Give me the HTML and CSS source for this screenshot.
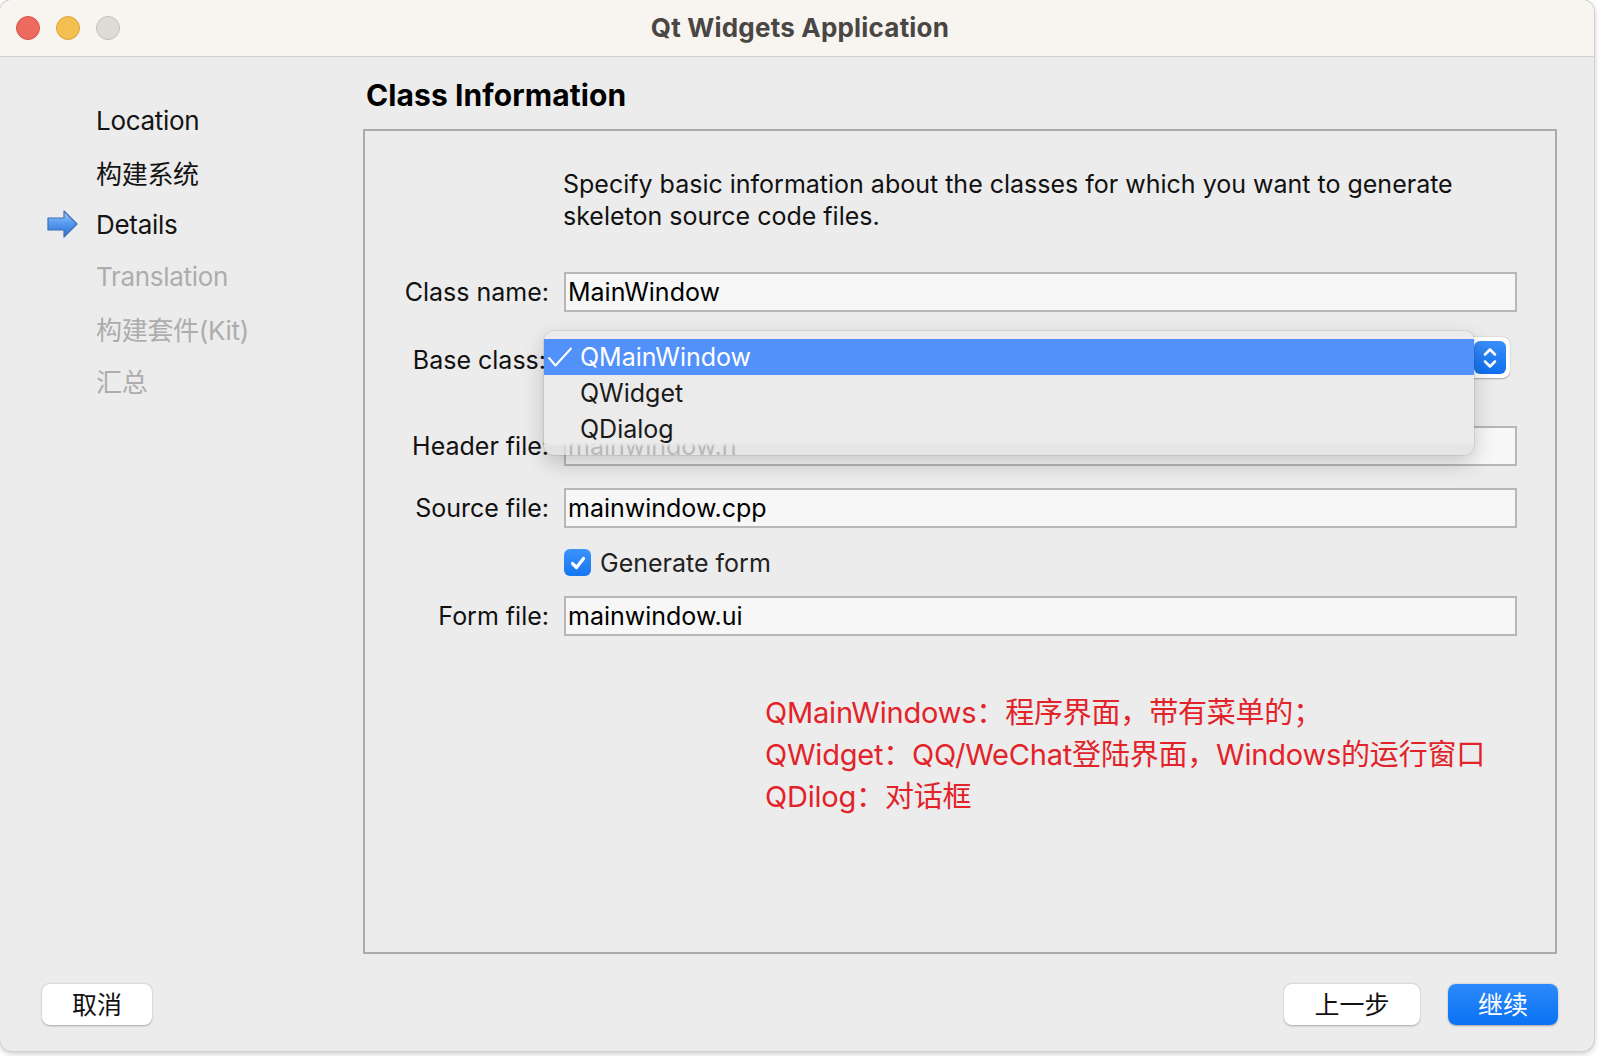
FILE: index.html
```html
<!DOCTYPE html>
<html>
<head>
<meta charset="utf-8">
<link rel="stylesheet" href="styles.css">
</head>
<body>
<div class="window">
  <div class="titlebar">
    <div class="lights">
      <span class="light red"></span>
      <span class="light yellow"></span>
      <span class="light gray"></span>
    </div>
    <div class="title">Qt Widgets Application</div>
  </div>
  <div class="content">
    <div class="sidebar">
      <div class="step done"><span class="marker"></span>Location</div>
      <div class="step done"><span class="marker"></span>构建系统</div>
      <div class="step current"><span class="marker"><svg width="32" height="30" viewBox="0 0 32 30"><defs><linearGradient id="ag" x1="0" y1="0" x2="0" y2="1"><stop offset="0" stop-color="#a4cbf8"/><stop offset="0.45" stop-color="#5a9cf0"/><stop offset="1" stop-color="#2a6fd6"/></linearGradient></defs><polygon points="1,9 17,9 17,2 30,15 17,28 17,21 1,21" fill="url(#ag)" stroke="#3d6fae" stroke-width="1.2" stroke-linejoin="round"/></svg></span>Details</div>
      <div class="step todo"><span class="marker"></span>Translation</div>
      <div class="step todo"><span class="marker"></span>构建套件(Kit)</div>
      <div class="step todo"><span class="marker"></span>汇总</div>
    </div>
    <div class="main">
      <h1 class="heading">Class Information</h1>
      <div class="group">
        <p class="desc">Specify basic information about the classes for which you want to generate skeleton source code files.</p>
        <div class="row r-class">
          <label class="lbl">Class name:</label>
          <div class="field">MainWindow</div>
        </div>
        <div class="row r-base">
          <label class="lbl">Base class:</label>
          <div class="combo">
            <span class="stepper"><svg width="18" height="26" viewBox="0 0 18 26"><path d="M4 9.5 L9 4.5 L14 9.5 M4 16.5 L9 21.5 L14 16.5" fill="none" stroke="#fff" stroke-width="2.6" stroke-linecap="round" stroke-linejoin="round"/></svg></span>
            <div class="menu">
              <div class="item selected"><span class="check"><svg width="26" height="20" viewBox="0 0 26 20"><path d="M2 11 L8.5 18.5 L24 1.5" fill="none" stroke="#fff" stroke-width="2" stroke-linecap="round" stroke-linejoin="round"/></svg></span>QMainWindow</div>
              <div class="item"><span class="check"></span>QWidget</div>
              <div class="item"><span class="check"></span>QDialog</div>
            </div>
          </div>
        </div>
        <div class="row r-header">
          <label class="lbl">Header file:</label>
          <div class="field dim">mainwindow.h</div>
        </div>
        <div class="row r-source">
          <label class="lbl">Source file:</label>
          <div class="field">mainwindow.cpp</div>
        </div>
        <div class="row r-check">
          <span class="lbl"></span>
          <div class="checkwrap"><span class="checkbox"><svg width="20" height="20" viewBox="0 0 20 20"><path d="M4.5 10.5 L8.5 14.5 L15.5 5.5" fill="none" stroke="#fff" stroke-width="3.2" stroke-linecap="round" stroke-linejoin="round"/></svg></span>Generate form</div>
        </div>
        <div class="row r-form">
          <label class="lbl">Form file:</label>
          <div class="field">mainwindow.ui</div>
        </div>
        <div class="notes">
          <div>QMainWindows：程序界面，带有菜单的；</div>
          <div>QWidget：QQ/WeChat登陆界面，Windows的运行窗口</div>
          <div>QDilog：对话框</div>
        </div>
      </div>
    </div>
  </div>
  <div class="footer">
    <button class="btn">取消</button>
    <div class="spacer"></div>
    <button class="btn back">上一步</button>
    <button class="btn primary">继续</button>
  </div>
</div>
</body>
</html>
```

FILE: styles.css
```css
* { box-sizing: border-box; }
html, body { margin: 0; padding: 0; background: #ffffff; }
body {
  width: 1600px; height: 1056px; overflow: hidden;
  font-family: Inter, "Noto Sans CJK SC", sans-serif;
  color: #111;
}
.window {
  width: 1594px; height: 1051px;
  background: #ececec;
  border-radius: 12px;
  overflow: hidden;
  display: flex; flex-direction: column;
  box-shadow: 0 0 0 1px #cfcfcf, 0 2px 6px rgba(0,0,0,0.25);
}
.titlebar {
  height: 57px; flex: none;
  background: #f8f5f0;
  border-bottom: 1px solid #d5d2ce;
  position: relative;
  display: flex; align-items: center; justify-content: center;
}
.lights { position: absolute; left: 16px; top: 16px; display: flex; gap: 16px; }
.light { width: 24px; height: 24px; border-radius: 50%; display: block; }
.red { background: #ee6a5f; border: 1px solid #d35548; }
.yellow { background: #f5bf4f; border: 1px solid #d8a442; }
.gray { background: #dedad6; border: 1px solid #c4c0bc; }
.title {
  font-size: 26px; font-weight: 700; color: #4a4644; letter-spacing: 0.2px;
  margin-top: -2px; margin-left: 6px;
}
.content { flex: 1; display: flex; min-height: 0; }
.sidebar { width: 363px; flex: none; padding-top: 37px; }
.step {
  height: 52px; display: flex; align-items: center;
  font-size: 26px; letter-spacing: -0.3px;
}
.step .marker { width: 96px; flex: none; display: flex; justify-content: flex-start; padding-left: 47px; }
.step.done, .step.current { color: #141414; }
.step.todo { color: #adadad; }
.main { flex: 1; display: flex; flex-direction: column; }
.heading {
  margin: 0; padding: 20px 0 0 3px;
  font-size: 30px; font-weight: 700; letter-spacing: 0.1px;
  line-height: 36px; height: 72px;
  color: #000;
}
.group {
  width: 1194px; height: 825px;
  border: 2px solid #ababab;
  padding-top: 37px;
  position: relative;
}
.desc {
  margin: 0 0 0 198px; width: 940px;
  font-size: 25px; line-height: 32px; letter-spacing: 0; color: #111;
}
.row { display: flex; align-items: center; }
.lbl {
  width: 184px; flex: none; text-align: right;
  font-size: 25px; letter-spacing: 0; color: #111;
}
.field {
  margin-left: 15px; width: 953px; height: 40px;
  background: #f7f7f7;
  border: 2px solid #b7b7b7;
  font-size: 25px; letter-spacing: 0; line-height: 36px;
  padding-left: 2px; color: #000;
}
.field.dim { color: #555; }
.r-class { margin-top: 40px; }
.r-base { margin-top: 25px; height: 41px; }
.r-base .lbl { padding-top: 5px; padding-right: 3px; }
.r-header { margin-top: 48px; }
.r-source { margin-top: 22px; }
.r-check { margin-top: 21px; height: 27px; }
.r-form { margin-top: 20px; }
.combo {
  margin-left: 15px; width: 946px; height: 41px;
  background: #ffffff; border-radius: 8px;
  box-shadow: 0 0.5px 1.5px rgba(0,0,0,0.3);
  position: relative;
}
.stepper {
  position: absolute; right: 4px; top: 4px;
  width: 32px; height: 33px; border-radius: 6px;
  background: linear-gradient(#3a8ff8, #0f6ff0);
  display: flex; align-items: center; justify-content: center;
}
.menu {
  position: absolute; left: -20px; top: -6px;
  width: 930px; height: 124px;
  background: linear-gradient(#ebebeb 0, #ebebeb 112px, rgba(222,222,222,0.72) 116px, rgba(222,222,222,0.72) 100%);
  border-radius: 10px;
  padding: 8px 0;
  box-shadow: 0 8px 22px rgba(0,0,0,0.2), 0 0 0 1px rgba(0,0,0,0.07);
  z-index: 5;
}
.item {
  height: 36px; display: flex; align-items: center;
  font-size: 25px; letter-spacing: 0; color: #1a1a1a;
}
.item .check { width: 36px; flex: none; padding-left: 3px; display: flex; align-items: center; }
.item.selected { background: #5291f9; color: #fff; }
.checkwrap {
  margin-left: 15px; display: flex; align-items: center;
  font-size: 25px; letter-spacing: 0; color: #222;
}
.checkbox {
  width: 27px; height: 27px; border-radius: 6px; margin-right: 9px;
  background: linear-gradient(#3b93fb, #1476f2);
  display: flex; align-items: center; justify-content: center;
}
.notes {
  margin: 56px 0 0 400px;
  color: #e2232a; font-size: 29px; line-height: 42px; letter-spacing: -0.2px;
}
.footer {
  height: 96px; flex: none; display: flex; align-items: flex-start;
  padding: 29px 36px 0 42px;
}
.spacer { flex: 1; }
.btn {
  height: 41px; border: none; border-radius: 8px;
  background: #ffffff;
  box-shadow: 0 0.5px 2px rgba(0,0,0,0.3);
  font-family: "Noto Sans CJK SC", sans-serif;
  font-size: 25px; color: #111; padding: 0 0 3px 0;
  width: 110px; line-height: 38px;
}
.btn.back { width: 136px; margin-right: 28px; }
.btn.primary {
  background: linear-gradient(#2b89fa, #0a72f3);
  color: #fff;
}
```
